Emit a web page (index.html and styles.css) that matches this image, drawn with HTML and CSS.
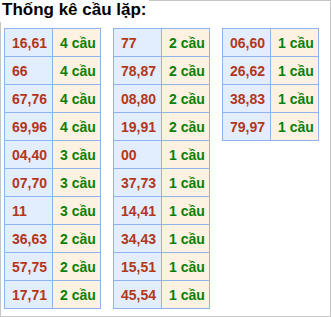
FILE: index.html
```html
<!DOCTYPE html>
<html>
<head>
<meta charset="utf-8">
<link rel="stylesheet" href="styles.css">
</head>
<body>
<div class="box">
  <div class="title">Thống kê cầu lặp:</div>
  <div class="tables">
    <table class="tk">
      <tr><td class="num">16,61</td><td class="cnt">4 cầu</td></tr>
      <tr><td class="num">66</td><td class="cnt">4 cầu</td></tr>
      <tr><td class="num">67,76</td><td class="cnt">4 cầu</td></tr>
      <tr><td class="num">69,96</td><td class="cnt">4 cầu</td></tr>
      <tr><td class="num">04,40</td><td class="cnt">3 cầu</td></tr>
      <tr><td class="num">07,70</td><td class="cnt">3 cầu</td></tr>
      <tr><td class="num">11</td><td class="cnt">3 cầu</td></tr>
      <tr><td class="num">36,63</td><td class="cnt">2 cầu</td></tr>
      <tr><td class="num">57,75</td><td class="cnt">2 cầu</td></tr>
      <tr><td class="num">17,71</td><td class="cnt">2 cầu</td></tr>
    </table>
    <table class="tk">
      <tr><td class="num">77</td><td class="cnt">2 cầu</td></tr>
      <tr><td class="num">78,87</td><td class="cnt">2 cầu</td></tr>
      <tr><td class="num">08,80</td><td class="cnt">2 cầu</td></tr>
      <tr><td class="num">19,91</td><td class="cnt">2 cầu</td></tr>
      <tr><td class="num">00</td><td class="cnt">1 cầu</td></tr>
      <tr><td class="num">37,73</td><td class="cnt">1 cầu</td></tr>
      <tr><td class="num">14,41</td><td class="cnt">1 cầu</td></tr>
      <tr><td class="num">34,43</td><td class="cnt">1 cầu</td></tr>
      <tr><td class="num">15,51</td><td class="cnt">1 cầu</td></tr>
      <tr><td class="num">45,54</td><td class="cnt">1 cầu</td></tr>
    </table>
    <table class="tk">
      <tr><td class="num">06,60</td><td class="cnt">1 cầu</td></tr>
      <tr><td class="num">26,62</td><td class="cnt">1 cầu</td></tr>
      <tr><td class="num">38,83</td><td class="cnt">1 cầu</td></tr>
      <tr><td class="num">79,97</td><td class="cnt">1 cầu</td></tr>
    </table>
  </div>
</div>
</body>
</html>
```
FILE: styles.css
```css
html, body {
  margin: 0;
  padding: 0;
  background: #fff;
}
body {
  font-family: "Liberation Sans", Arial, sans-serif;
}
.box {
  width: 331px;
  height: 317px;
  box-sizing: border-box;
  border: 1px solid #c6c6c6;
}
.title {
  display: inline-block;
  margin: -1px 0 0 -1px;
  padding: 0 2px 0 2px;
  height: 22px;
  box-sizing: border-box;
  background: #fff;
  font-size: 17px;
  font-weight: bold;
  color: #000;
  line-height: 20px;
}
.tables {
  display: flex;
  align-items: flex-start;
  gap: 12px;
  padding-left: 3px;
  margin-top: 6px;
}
.tk {
  border-collapse: collapse;
  width: 97px;
  table-layout: fixed;
}
.tk td {
  border: 1px solid #8fb3ee;
  height: 28px;
  padding: 0 0 0 7px;
  font-size: 14px;
  font-weight: bold;
  white-space: nowrap;
  box-sizing: border-box;
}
.tk td.num {
  width: 48px;
  background: #e2edfd;
  color: #b3371c;
}
.tk td.cnt {
  background: #fdf2e1;
  color: #098009;
}
```
